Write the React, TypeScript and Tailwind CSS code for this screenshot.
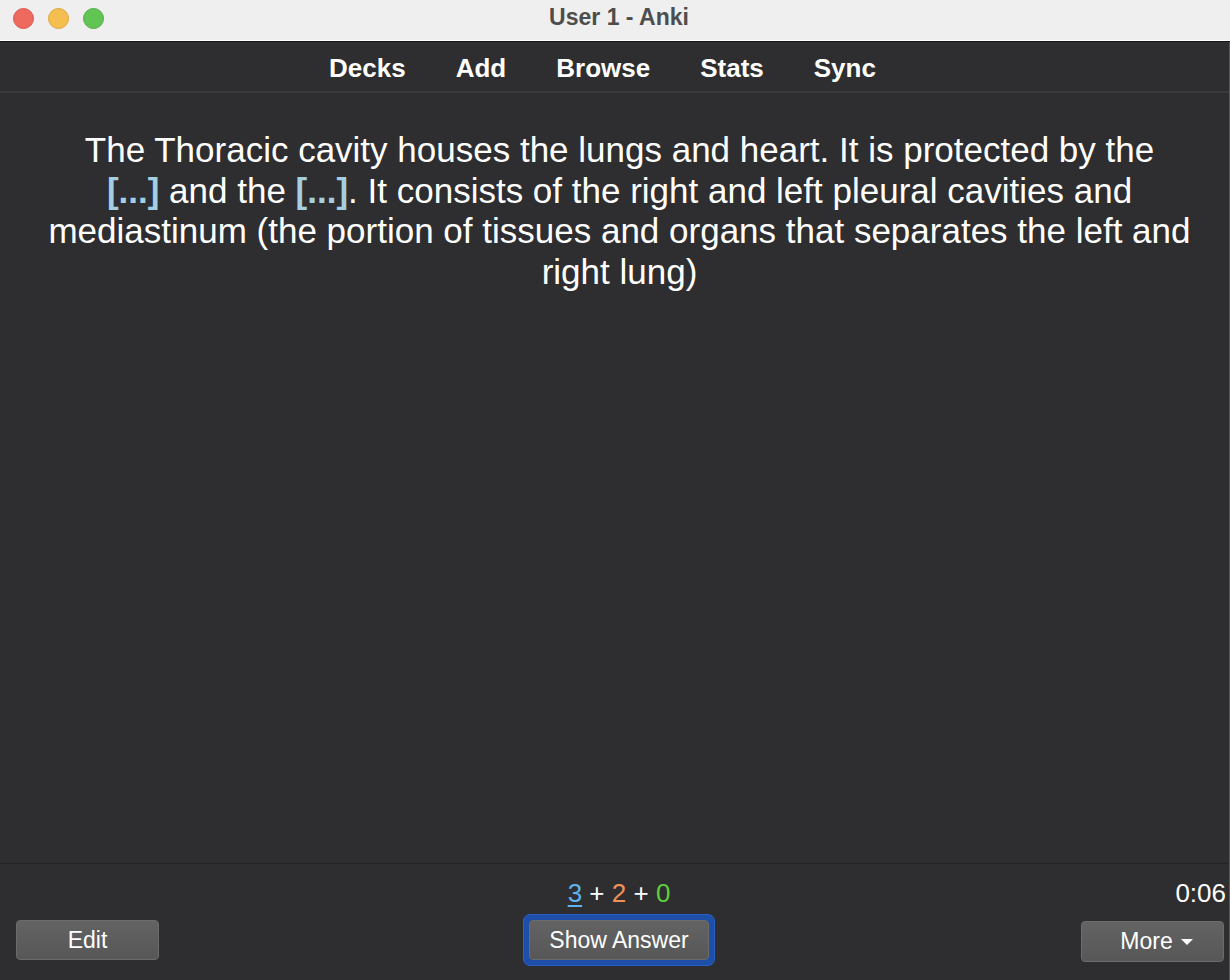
import React from 'react';

const sans = { fontFamily: '"Liberation Sans", Arial, sans-serif' };

function TrafficLights() {
  return (
    <div className="flex items-center gap-[14px] pl-[13px] -mt-[4px]">
      <span className="w-[21px] h-[21px] rounded-full bg-[#ee6a5f] border border-[#d9574c]" />
      <span className="w-[21px] h-[21px] rounded-full bg-[#f5bf4f] border border-[#dea73b]" />
      <span className="w-[21px] h-[21px] rounded-full bg-[#61c554] border border-[#4fae44]" />
    </div>
  );
}

function Cloze() {
  return <span className="font-bold text-[#a3cfe0]">[...]</span>;
}

export default function App() {
  const navItems = ['Decks', 'Add', 'Browse', 'Stats', 'Sync'];

  return (
    <div
      className="w-[1230px] h-[980px] flex flex-col bg-[#2e2e30] overflow-hidden"
      style={sans}
    >
      {/* window title bar */}
      <div className="relative h-[41px] shrink-0 bg-[#efefef] flex items-center border-b border-white">
        <TrafficLights />
        <div className="absolute inset-0 flex items-center justify-center pl-[8px] pb-[6px] text-[23px] font-bold text-[#4d4d4d]">
          User 1 - Anki
        </div>
      </div>
      <div className="h-[1px] shrink-0 bg-[#161616]" />

      <div className="flex-1 flex flex-col border-r border-[#5a5a5a] min-h-0">
        {/* top toolbar */}
        <div className="h-[51px] shrink-0 flex items-center justify-center gap-[50px] pr-[24px] pt-[4px] border-b-2 border-[#39393b]">
          {navItems.map((item) => (
            <span key={item} className="text-[26px] font-bold text-white">
              {item}
            </span>
          ))}
        </div>

        {/* card */}
        <div className="flex-1 min-h-0 pt-[37px] pl-[18px] pr-[8px] text-center text-white text-[35px] leading-[40.5px]">
          The Thoracic cavity houses the lungs and heart. It is protected by the
          <br />
          <Cloze /> and the <Cloze />. It consists of the right and left pleural cavities and
          <br />
          mediastinum (the portion of tissues and organs that separates the left and
          <br />
          right lung)
        </div>

        {/* bottom bar */}
        <div className="h-[117px] shrink-0 border-t border-[#232325] flex items-start justify-between pl-[16px] pr-[5px] pt-[13px]">
          <div className="w-[143px] flex flex-col">
            <div className="h-[43px]" />
            <button className="h-[40px] w-[143px] rounded-[4px] border border-[#6b6b6b] bg-gradient-to-b from-[#636363] to-[#575757] text-white text-[23px]">
              Edit
            </button>
          </div>

          <div className="flex flex-col items-center -ml-[2px]">
            <div className="h-[37px] text-[26px] leading-[32px] text-white">
              <span className="text-[#5fb2ee] underline underline-offset-[3px]">3</span>
              {' + '}
              <span className="text-[#f0915a]">2</span>
              {' + '}
              <span className="text-[#5ccf3c]">0</span>
            </div>
            <div className="rounded-[7px] p-[5px] bg-[#1d4ea8] border border-[#2a60c4]">
              <button className="h-[40px] w-[180px] rounded-[4px] border border-[#6b6b6b] bg-gradient-to-b from-[#636363] to-[#575757] text-white text-[23px]">
                Show Answer
              </button>
            </div>
          </div>

          <div className="w-[143px] flex flex-col items-end">
            <div className="h-[44px] text-[26px] leading-[32px] text-white -mr-[2px]">0:06</div>
            <button className="h-[41px] w-[143px] rounded-[4px] border border-[#6b6b6b] bg-gradient-to-b from-[#636363] to-[#575757] text-white text-[23px] flex items-center justify-center gap-[8px] pl-[8px]">
              More
              <svg width="12" height="6" viewBox="0 0 12 6">
                <path d="M0 0 L12 0 L6 6 Z" fill="white" />
              </svg>
            </button>
          </div>
        </div>
      </div>
    </div>
  );
}
